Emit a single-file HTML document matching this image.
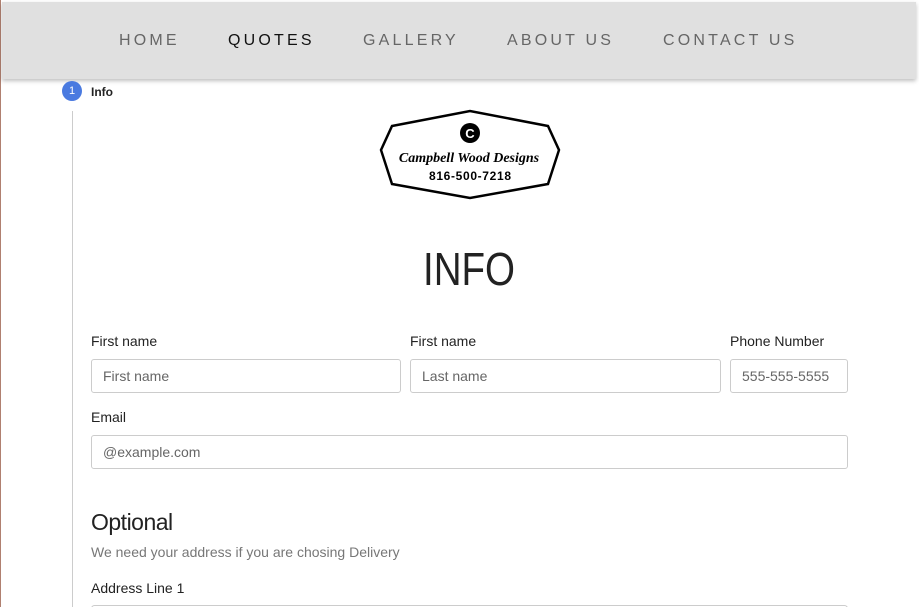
<!DOCTYPE html>
<html><head><meta charset="utf-8"><style>
*{box-sizing:border-box;margin:0;padding:0}
html,body{width:919px;height:607px;overflow:hidden}
body{background:#fff;font-family:"Liberation Sans",sans-serif;position:relative}
.edge{position:absolute;left:0;top:0;width:1px;height:607px;background:#b08070}
.nav{position:absolute;left:2px;top:2px;width:914px;height:77px;background:#e0e0e0;box-shadow:0 2px 4px rgba(0,0,0,.25)}
.nav span{position:absolute;top:30px;font-size:16px;letter-spacing:3.2px;color:#666}
.step{position:absolute;left:62px;top:81px;width:20px;height:20px;border-radius:50%;background:#4a7ae0;color:#fff;font-size:11px;text-align:center;line-height:20px}
.stepl{position:absolute;left:91px;top:85px;font-size:12px;font-weight:bold;color:#222}
.vline{position:absolute;left:72px;top:111px;width:1px;height:496px;background:#ccc}
.lbl{position:absolute;font-size:14px;color:#222}
.in{position:absolute;border:1px solid #ccc;border-radius:3px;height:34px;font-size:14px;color:#666;padding:8px 11px}
</style></head><body>
<div class="edge"></div>
<div class="nav">
<span style="left:117px">HOME</span>
<span style="left:226px;color:#111">QUOTES</span>
<span style="left:361px">GALLERY</span>
<span style="left:505px">ABOUT US</span>
<span style="left:661px">CONTACT US</span>
</div>
<div class="step">1</div><div class="stepl">Info</div>
<div class="vline"></div>
<svg style="position:absolute;left:0;top:0" width="919" height="607">
<polygon points="381,150 392,126 470,111 548,126 559,150 548,184 470,198 392,184" fill="none" stroke="#000" stroke-width="2.5"/>
<circle cx="470" cy="133" r="10" fill="#000"/>
<text x="470" y="138" font-size="13" font-weight="bold" fill="#fff" text-anchor="middle" font-family="Liberation Sans">C</text>
<text x="469" y="162" font-size="14" font-style="italic" font-weight="bold" text-anchor="middle" font-family="Liberation Serif">Campbell Wood Designs</text>
<text x="470" y="180" font-size="12" font-weight="bold" text-anchor="middle" font-family="Liberation Sans" textLength="82">816-500-7218</text>
<text x="469" y="285" font-size="46" text-anchor="middle" font-family="Liberation Sans" fill="#222" textLength="92" lengthAdjust="spacingAndGlyphs">INFO</text>
<rect x="91.5" y="605.5" width="756" height="10" rx="3" fill="none" stroke="#ccc"/>
</svg>
<div class="lbl" style="left:91px;top:333px">First name</div>
<div class="lbl" style="left:410px;top:333px">First name</div>
<div class="lbl" style="left:730px;top:333px">Phone Number</div>
<div class="in" style="left:91px;top:359px;width:310px">First name</div>
<div class="in" style="left:410px;top:359px;width:311px">Last name</div>
<div class="in" style="left:730px;top:359px;width:118px">555-555-5555</div>
<div class="lbl" style="left:91px;top:409px">Email</div>
<div class="in" style="left:91px;top:435px;width:757px">@example.com</div>
<div class="lbl" style="left:91px;top:509px;font-size:23px;letter-spacing:-0.5px">Optional</div>
<div class="lbl" style="left:91px;top:544px;color:#777">We need your address if you are chosing Delivery</div>
<div class="lbl" style="left:91px;top:580px">Address Line 1</div>
</body></html>
